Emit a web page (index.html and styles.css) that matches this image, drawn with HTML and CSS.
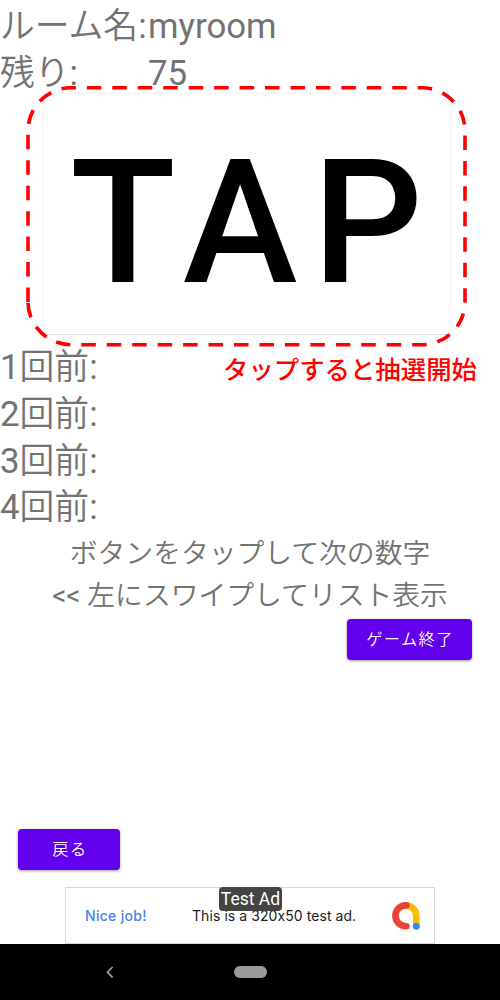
FILE: index.html
```
<!DOCTYPE html>
<html lang="ja">
<head>
<meta charset="utf-8">
<title>myroom</title>
<link rel="stylesheet" href="styles.css">
</head>
<body>
<main class="screen">
  <div class="row"><span class="label">ルーム名:</span><span>myroom</span></div>
  <div class="row"><span class="label">残り:</span><span>75</span></div>
  <button class="tap">TAP</button>
  <div class="history">
    <div class="row">1回前:</div>
    <div class="row">2回前:</div>
    <div class="row">3回前:</div>
    <div class="row">4回前:</div>
  </div>
  <p class="hint">ボタンをタップして次の数字</p>
  <p class="hint">&lt;&lt; 左にスワイプしてリスト表示</p>
  <button class="button finish">ゲーム終了</button>
  <button class="button back">戻る</button>
  <aside class="ad">
    <span class="ad-title">Nice job!</span>
    <span class="ad-text">This is a 320x50 test ad.</span>
    <svg class="ad-logo" width="30" height="30" viewBox="0 0 30 30" fill="none" stroke-width="6.6" stroke-linecap="round">
      <path d="M15.5 4.4A10.6 10.6 0 0 1 25.3 15V25" stroke="#fbbc04"/>
      <path d="M15.3 4.4H14.8A10.4 10.4 0 0 0 14.8 25.2H15.3" stroke="#ea4335"/>
      <circle cx="25.3" cy="25.2" r="3.5" fill="#4285f4"/>
    </svg>
    <span class="ad-badge">Test Ad</span>
  </aside>
  <nav class="navbar">
    <svg class="nav-back" width="10" height="14" viewBox="0 0 10 14" fill="none" stroke="#aaa" stroke-width="1.6"><path d="M7.6 2L2.4 7.2L7.6 12.4"/></svg>
    <span class="nav-home"></span>
  </nav>
  <svg class="outline" width="445" height="264" viewBox="0 0 445 264" fill="none" stroke="#f00" stroke-width="3.6" stroke-dasharray="14.5 10.95">
    <path d="M4 218V46.7A43 43 0 0 1 47 3.8H398A43 43 0 0 1 441 46.7V218A43 43 0 0 1 398 260.7H47A43 43 0 0 1 4 218"/>
  </svg>
  <span class="note">タップすると抽選開始</span>
</main>
</body>
</html>
```
FILE: styles.css
```
* { box-sizing: border-box; }
body { margin: 0; background: #fff; }
.screen {
  position: relative;
  display: flex;
  flex-direction: column;
  width: 500px;
  height: 1000px;
  overflow: hidden;
  font-family: Roboto, "Noto Sans CJK JP DemiLight", "Noto Sans CJK JP", sans-serif;
  color: #737373;
}
.row { display: flex; height: 46.8px; line-height: 52px; font-size: 34.8px; white-space: nowrap; }
.label { width: 148px; }
button { border: 0; padding: 0; font-family: inherit; }
.tap {
  width: 406px;
  height: 240.5px;
  margin: 0 0 0 44px;
  padding: 17px 0 0 14px;
  border-radius: 4px;
  background: #fff;
  box-shadow: 0 0 2px rgba(0, 0, 0, .2), 0 1px 1px rgba(0, 0, 0, .08);
  color: #000;
  font-size: 173px;
  font-weight: 500;
  letter-spacing: 15px;
  line-height: 225px;
}
.history { margin-top: 7px; }
.hint {
  height: 42.4px;
  margin: 0;
  line-height: 41px;
  font-size: 27.8px;
  text-align: center;
  white-space: nowrap;
}
.history + .hint { margin-top: 4.4px; }
.button {
  height: 41px;
  border-radius: 4px;
  background: #6200ee;
  box-shadow: 0 1px 3px rgba(0, 0, 0, .4);
  color: #fff;
  font-size: 16.2px;
  letter-spacing: 1.4px;
  line-height: 42px;
}
.finish { align-self: flex-end; width: 125px; margin: 2px 28px 0 0; padding-left: 1px; }
.back { width: 102px; margin: auto 0 17px 18.4px; padding-left: 1px; }
.ad {
  position: relative;
  display: flex;
  align-items: center;
  flex: none;
  width: 370px;
  height: 57px;
  margin-left: 65px;
  padding: 0 13px 0 19px;
  border: 1px solid #d2dade;
  font-family: Inter, sans-serif;
  font-size: 14px;
  font-feature-settings: "calt" 0;
  color: #202124;
  white-space: nowrap;
}
.ad-title { width: 107px; color: #4285f4; font-weight: 500; letter-spacing: .3px; }
.ad-text { letter-spacing: .07px; }
.ad-logo { margin-left: auto; }
.ad-badge {
  position: absolute;
  left: 153px;
  top: -1px;
  width: 63px;
  height: 24px;
  border-radius: 4px;
  background: #444;
  color: #fff;
  font: 17.5px/24px Roboto, sans-serif;
  text-align: center;
}
.navbar {
  display: grid;
  grid-template-columns: 220px 60px 220px;
  flex: none;
  align-items: center;
  justify-items: center;
  height: 56px;
  background: #000;
}
.nav-home { width: 33px; height: 12px; border-radius: 6px; background: #999; }
.outline { position: absolute; left: 24px; top: 84px; }
.note {
  position: absolute;
  left: 223px;
  top: 350px;
  color: #f00;
  font-family: "Noto Sans CJK JP", sans-serif;
  font-size: 25.4px;
  font-weight: 500;
  line-height: 36px;
  white-space: nowrap;
}
```
